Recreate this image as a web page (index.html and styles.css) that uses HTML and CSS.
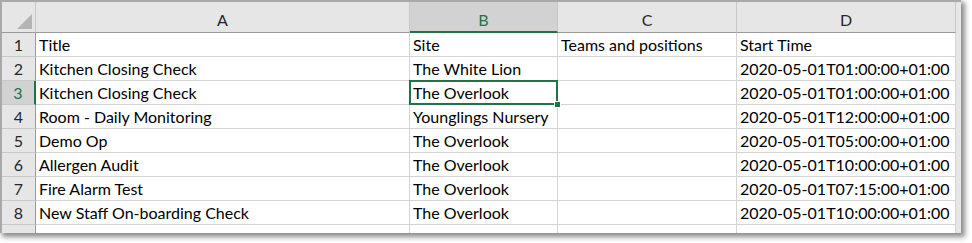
FILE: index.html
```html
<!DOCTYPE html>
<html>
<head>
<meta charset="utf-8">
<link rel="stylesheet" href="styles.css">
</head>
<body>
<div class="window">
  <div class="sheet">
    <div class="hd corner"><span class="tri"></span></div>
    <div class="hd col">A</div>
    <div class="hd col sel">B</div>
    <div class="hd col">C</div>
    <div class="hd col">D</div>

    <div class="rh">1</div><div class="c">Title</div><div class="c">Site</div><div class="c">Teams and positions</div><div class="c">Start Time</div>
    <div class="rh">2</div><div class="c">Kitchen Closing Check</div><div class="c">The White Lion</div><div class="c"></div><div class="c">2020-05-01T01:00:00+01:00</div>
    <div class="rh rsel">3</div><div class="c">Kitchen Closing Check</div><div class="c active">The Overlook<span class="handle"></span></div><div class="c"></div><div class="c">2020-05-01T01:00:00+01:00</div>
    <div class="rh">4</div><div class="c">Room - Daily Monitoring</div><div class="c">Younglings Nursery</div><div class="c"></div><div class="c">2020-05-01T12:00:00+01:00</div>
    <div class="rh">5</div><div class="c">Demo Op</div><div class="c">The Overlook</div><div class="c"></div><div class="c">2020-05-01T05:00:00+01:00</div>
    <div class="rh">6</div><div class="c">Allergen Audit</div><div class="c">The Overlook</div><div class="c"></div><div class="c">2020-05-01T10:00:00+01:00</div>
    <div class="rh">7</div><div class="c">Fire Alarm Test</div><div class="c">The Overlook</div><div class="c"></div><div class="c">2020-05-01T07:15:00+01:00</div>
    <div class="rh">8</div><div class="c">New Staff On-boarding Check</div><div class="c">The Overlook</div><div class="c"></div><div class="c">2020-05-01T10:00:00+01:00</div>
    <div class="rh part">9</div><div class="c part"></div><div class="c part">The Hobbit</div><div class="c part"></div><div class="c part"></div>
  </div>
</div>
</body>
</html>
```
FILE: styles.css
```css
html, body {
  margin: 0;
  padding: 0;
  background: #ffffff;
}
body {
  width: 972px;
  height: 243px;
  overflow: hidden;
  font-family: "Lato", "Open Sans", sans-serif;
  font-size: 16px;
  color: #000;
}
.window {
  width: 959px;
  height: 231px;
  border-top: 2px solid #a9a9a9;
  border-left: 2px solid #a9a9a9;
  background: #e6e6e6;
  box-shadow: 3px 3px 5px 1px rgba(0,0,0,0.45);
  overflow: hidden;
}
.sheet {
  display: grid;
  grid-template-columns: 34px 374px 148px 179px 219px;
  grid-template-rows: 31px repeat(8, 24px) 24px;
  background: #fff;
  width: 954px;
}
.hd {
  background: #e6e6e6;
  border-bottom: 1px solid #9b9b9b;
  border-right: 1px solid #c8c8c8;
  display: flex;
  align-items: center;
  justify-content: center;
  color: #262626;
  padding-top: 5px;
  box-sizing: border-box;
}
.hd.corner {
  position: relative;
  border-right: 1px solid #c8c8c8;
}
.tri {
  position: absolute;
  right: 3px;
  bottom: 3px;
  width: 0;
  height: 0;
  border-left: 15px solid transparent;
  border-bottom: 15px solid #b4b4b4;
}
.hd.sel {
  background: #d2d2d2;
  color: #217346;
  border-bottom: 2px solid #217346;
}
.rh {
  background: #e6e6e6;
  border-right: 1px solid #9b9b9b;
  border-bottom: 1px solid #c8c8c8;
  box-sizing: border-box;
  display: flex;
  align-items: center;
  justify-content: center;
  color: #262626;
}
.rh.rsel {
  background: #d2d2d2;
  color: #217346;
  border-right: 2px solid #217346;
}
.c {
  border-right: 1px solid #d4d4d4;
  border-bottom: 1px solid #d4d4d4;
  box-sizing: border-box;
  padding: 0 0 0 3px;
  display: flex;
  align-items: center;
  white-space: nowrap;
  overflow: hidden;
}
.c.active {
  position: relative;
  overflow: visible;
  box-shadow: inset 0 0 0 2px #217346;
  margin: -1px 0 0 -1px;
  border: none;
  padding-left: 4px;
  width: 149px;
  height: 25px;
}
.handle {
  position: absolute;
  right: -3px;
  bottom: -3px;
  width: 5px;
  height: 5px;
  background: #217346;
  border: 1px solid #fff;
}
.part {
  border-bottom: none;
}
```
